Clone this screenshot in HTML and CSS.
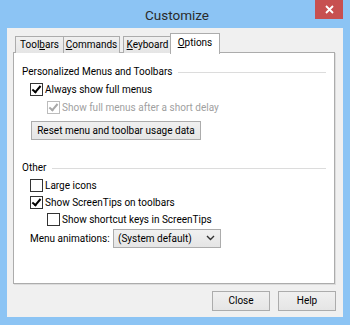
FILE: index.html
```html
<!DOCTYPE html>
<html>
<head>
<meta charset="utf-8">
<link rel="stylesheet" href="styles.css">
</head>
<body>
<div class="window">
  <div class="titlebar">
    <span class="spacer"></span>
    <span class="title">Customize</span>
    <span class="close"><svg width="9" height="9" viewBox="0 0 9 9"><path d="M1 1 L8 8 M8 1 L1 8" stroke="#fff" stroke-width="1.8" fill="none"/></svg></span>
  </div>
  <div class="client">
    <div class="tabs">
      <div class="tab t1">Tool<u>b</u>ars</div>
      <div class="tab t2"><u>C</u>ommands</div>
      <div class="tab t3"><u>K</u>eyboard</div>
      <div class="tab t4 selected"><u>O</u>ptions</div>
    </div>
    <div class="panel">
      <div class="group-head">Personalized Menus and Toolbars</div>
      <div class="row r18"><span class="cb on"></span>Always show full menus</div>
      <div class="row r18 indent disabled"><span class="cb on dis"></span>Show full menus after a short delay</div>
      <div class="btn reset">Reset menu and toolbar usage data</div>
      <div class="group-head other">Other</div>
      <div class="row r17"><span class="cb"></span>Large icons</div>
      <div class="row r17"><span class="cb on"></span>Show ScreenTips on toolbars</div>
      <div class="row r17 indent"><span class="cb"></span>Show shortcut keys in ScreenTips</div>
      <div class="row anim">
        <span class="anim-label">Menu animations:</span>
        <span class="select">(System default)<svg class="chev" width="9" height="6" viewBox="0 0 9 6"><path d="M1 1 L4.5 4.5 L8 1" stroke="#333" stroke-width="1.4" fill="none"/></svg></span>
      </div>
    </div>
    <div class="footer">
      <div class="btn fbtn">Close</div>
      <div class="btn fbtn">Help</div>
    </div>
  </div>
</div>
</body>
</html>
```
FILE: styles.css
```css
html, body {
  margin: 0;
  padding: 0;
}
body {
  width: 350px;
  height: 325px;
  overflow: hidden;
  font-family: Roboto, "Noto Sans", sans-serif;
  font-size: 10px;
  color: #000;
}
.window {
  width: 350px;
  height: 325px;
  box-sizing: border-box;
  background: #8cc4f4;
  padding: 0 7px 8px 7px;
  display: flex;
  flex-direction: column;
}
.titlebar {
  height: 28px;
  display: grid;
  grid-template-columns: 1fr auto 1fr;
  align-items: start;
}
.title {
  font-size: 13.5px;
  color: #2b2b2b;
  line-height: 30px;
  padding-left: 4px;
}
.close {
  justify-self: end;
  width: 28px;
  height: 19px;
  background: #c75050;
  display: flex;
  align-items: center;
  justify-content: center;
}
.client {
  flex: 1;
  background: #f0f0f0;
  padding: 5px 8px 6px 6px;
  display: flex;
  flex-direction: column;
}
.tabs {
  height: 20px;
  display: flex;
  align-items: flex-end;
  padding-left: 2px;
  position: relative;
  z-index: 1;
}
.tab {
  height: 17px;
  box-sizing: border-box;
  border: 1px solid #acacac;
  border-bottom: none;
  background: linear-gradient(#f0f0f0, #e5e5e5);
  line-height: 15px;
  text-align: center;
  margin-right: -1px;
}
.t1 { width: 49px; }
.t2 { width: 57px; }
.t3 { width: 49px; margin-left: 4px; }
.t4 { width: 50px; }
.tab.selected {
  height: 21px;
  margin-bottom: -1px;
  margin-left: -1px;
  background: #fff;
  line-height: 17px;
}
.panel {
  flex: 1;
  margin-top: -1px;
  background: #fff;
  border: 1px solid #acacac;
  box-shadow: 1px 1px 0 #dcdcdc;
  padding: 11px 8px 0 8px;
  display: flex;
  flex-direction: column;
}
.group-head {
  height: 16px;
  line-height: 16px;
  display: flex;
  align-items: center;
  white-space: nowrap;
}
.group-head::after {
  content: "";
  flex: 1;
  height: 1px;
  background: #dcdcdc;
  margin-left: 6px;
}
.group-head.other {
  margin-top: 20px;
  margin-bottom: 1px;
}
.row {
  display: flex;
  align-items: center;
  padding-left: 8px;
  white-space: nowrap;
}
.r18 { height: 18px; }
.r17 { height: 17px; }
.indent { padding-left: 25px; }
.disabled { color: #a0a0a0; }
.cb {
  width: 13px;
  height: 13px;
  box-sizing: border-box;
  border: 1px solid #333;
  background: #fff;
  margin-right: 2px;
  display: inline-block;
  position: relative;
  flex: none;
}
.cb.on::after {
  content: "";
  position: absolute;
  left: 3px;
  top: 0px;
  width: 3px;
  height: 7px;
  border: solid #000;
  border-width: 0 2px 2px 0;
  transform: rotate(40deg);
}
.cb.dis {
  border-color: #bcbcbc;
}
.cb.dis::after {
  border-color: #a8a8a8;
}
.btn {
  box-sizing: border-box;
  border: 1px solid #acacac;
  background: linear-gradient(#f0f0f0, #e5e5e5);
  height: 19px;
  line-height: 17px;
  text-align: center;
  white-space: nowrap;
}
.reset {
  align-self: flex-start;
  margin-left: 9px;
  margin-top: 5px;
  width: 170px;
}
.anim {
  height: 20px;
  padding-left: 8px;
}
.anim-label {
  width: 83px;
}
.select {
  width: 108px;
  height: 19px;
  box-sizing: border-box;
  border: 1px solid #acacac;
  background: linear-gradient(#f0f0f0, #e5e5e5);
  padding: 0 5px 0 4px;
  display: flex;
  align-items: center;
  justify-content: space-between;
}
.footer {
  margin-top: 7px;
  display: flex;
  justify-content: flex-end;
  gap: 8px;
  margin-right: -1px;
}
.fbtn {
  width: 58px;
  height: 20px;
  line-height: 18px;
}
```
